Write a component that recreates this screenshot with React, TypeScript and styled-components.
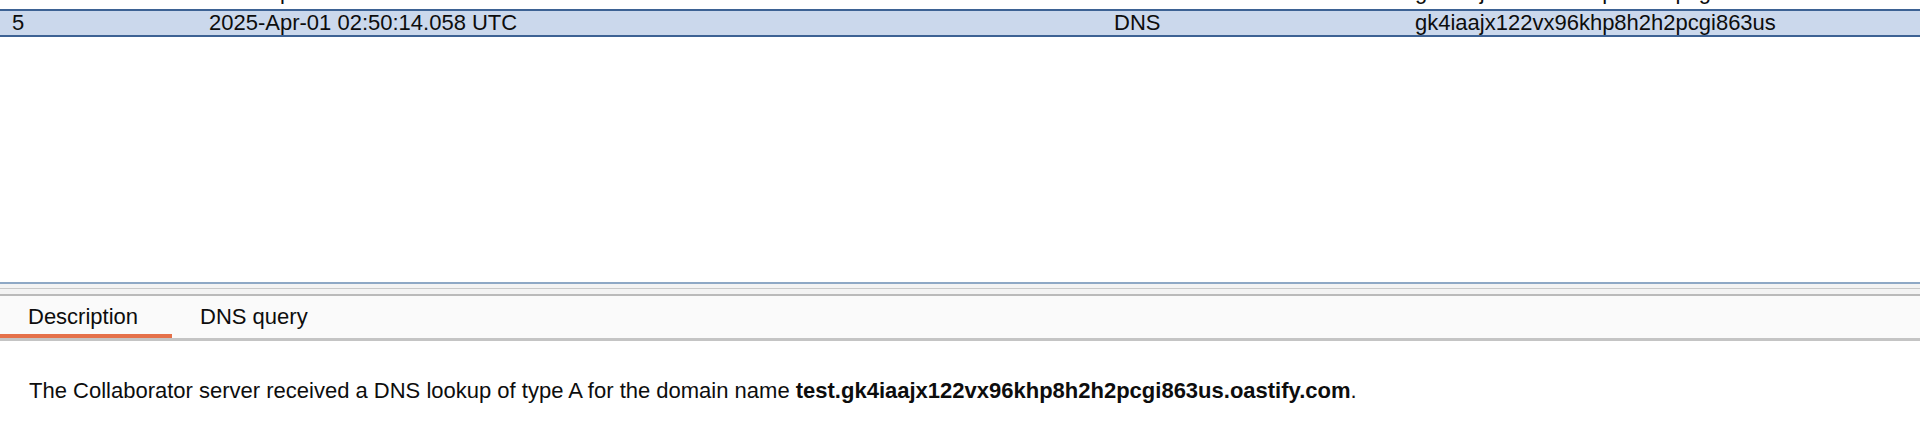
import React from 'react'
import styled, { createGlobalStyle } from 'styled-components'

type Interaction = {
  id: number
  time: string
  type: string
  payload: string
}

const rows: Interaction[] = [
  { id: 4, time: '2025-Apr-01 02:50:14.031 UTC', type: 'DNS', payload: 'gk4iaajx122vx96khp8h2h2pcgi863us' },
  { id: 5, time: '2025-Apr-01 02:50:14.058 UTC', type: 'DNS', payload: 'gk4iaajx122vx96khp8h2h2pcgi863us' },
]

const tabs = ['Description', 'DNS query']

const App: React.FC = (): JSX.Element => {
  return (
    <>
      <GlobalStyle />
      <Page>
        <TablePane>
          <Rows>
            {rows.map(row => (
              <Row key={row.id} selected={row.id === 5}>
                <Cell>{row.id}</Cell>
                <Cell>{row.time}</Cell>
                <Cell>{row.type}</Cell>
                <Cell>{row.payload}</Cell>
              </Row>
            ))}
          </Rows>
        </TablePane>
        <Splitter>
          <Grip />
        </Splitter>
        <TabBar>
          {tabs.map((tab, i) => (
            <Tab key={tab} active={i === 0}>
              {tab}
            </Tab>
          ))}
        </TabBar>
        <Details>
          The Collaborator server received a DNS lookup of type A for the domain name{' '}
          <strong>test.gk4iaajx122vx96khp8h2h2pcgi863us.oastify.com</strong>.
        </Details>
      </Page>
    </>
  )
}

export default App

const GlobalStyle = createGlobalStyle`
  body {
    margin: 0;
    background: #ffffff;
    font-family: 'Liberation Sans', Arial, sans-serif;
    color: #0d0d0d;
  }
`

const Page = styled.div`
  width: 1920px;
  height: 426px;
  display: flex;
  flex-direction: column;
  overflow: hidden;
  background: #ffffff;
`

const TablePane = styled.div`
  height: 282px;
  flex: none;
  overflow: hidden;
  border-bottom: 2px solid #8ea8c5;
`

/* list is scrolled: only the foot of the previous row peeks in */
const Rows = styled.div`
  margin-top: -22px;
  display: flex;
  flex-direction: column;
  gap: 3px;
`

const Row = styled.div<{ selected?: boolean }>`
  box-sizing: border-box;
  height: 28px;
  display: grid;
  grid-template-columns: 197px 905px 301px 1fr;
  align-items: center;
  font-size: 22px;
  background: ${props => (props.selected ? '#cbd8ec' : '#ffffff')};
  border-top: 2px solid ${props => (props.selected ? '#3d6294' : 'transparent')};
  border-bottom: 2px solid ${props => (props.selected ? '#3d6294' : 'transparent')};
`

const Cell = styled.span`
  padding-left: 12px;
  white-space: nowrap;
  line-height: 24px;
`

const Splitter = styled.div`
  box-sizing: border-box;
  height: 12px;
  flex: none;
  padding-top: 4px;
  background: #f3f3f3;
  border-bottom: 2px solid #bababa;
`

const Grip = styled.div`
  height: 1px;
  background: #c9c9c9;
`

const TabBar = styled.div`
  height: 42px;
  flex: none;
  display: flex;
  background: #fafafa;
  border-bottom: 3px solid #c4c4c4;
`

const Tab = styled.div<{ active?: boolean }>`
  box-sizing: border-box;
  display: flex;
  align-items: center;
  padding: 4px 34px 0 28px;
  font-size: 22px;
  color: #0d0d0d;
  border-bottom: 4px solid ${props => (props.active ? '#e5714a' : 'transparent')};
`

const Details = styled.div`
  padding: 37px 29px 0;
  font-size: 22px;
  line-height: 26px;
  color: #0d0d0d;

  strong {
    font-weight: 700;
  }
`
